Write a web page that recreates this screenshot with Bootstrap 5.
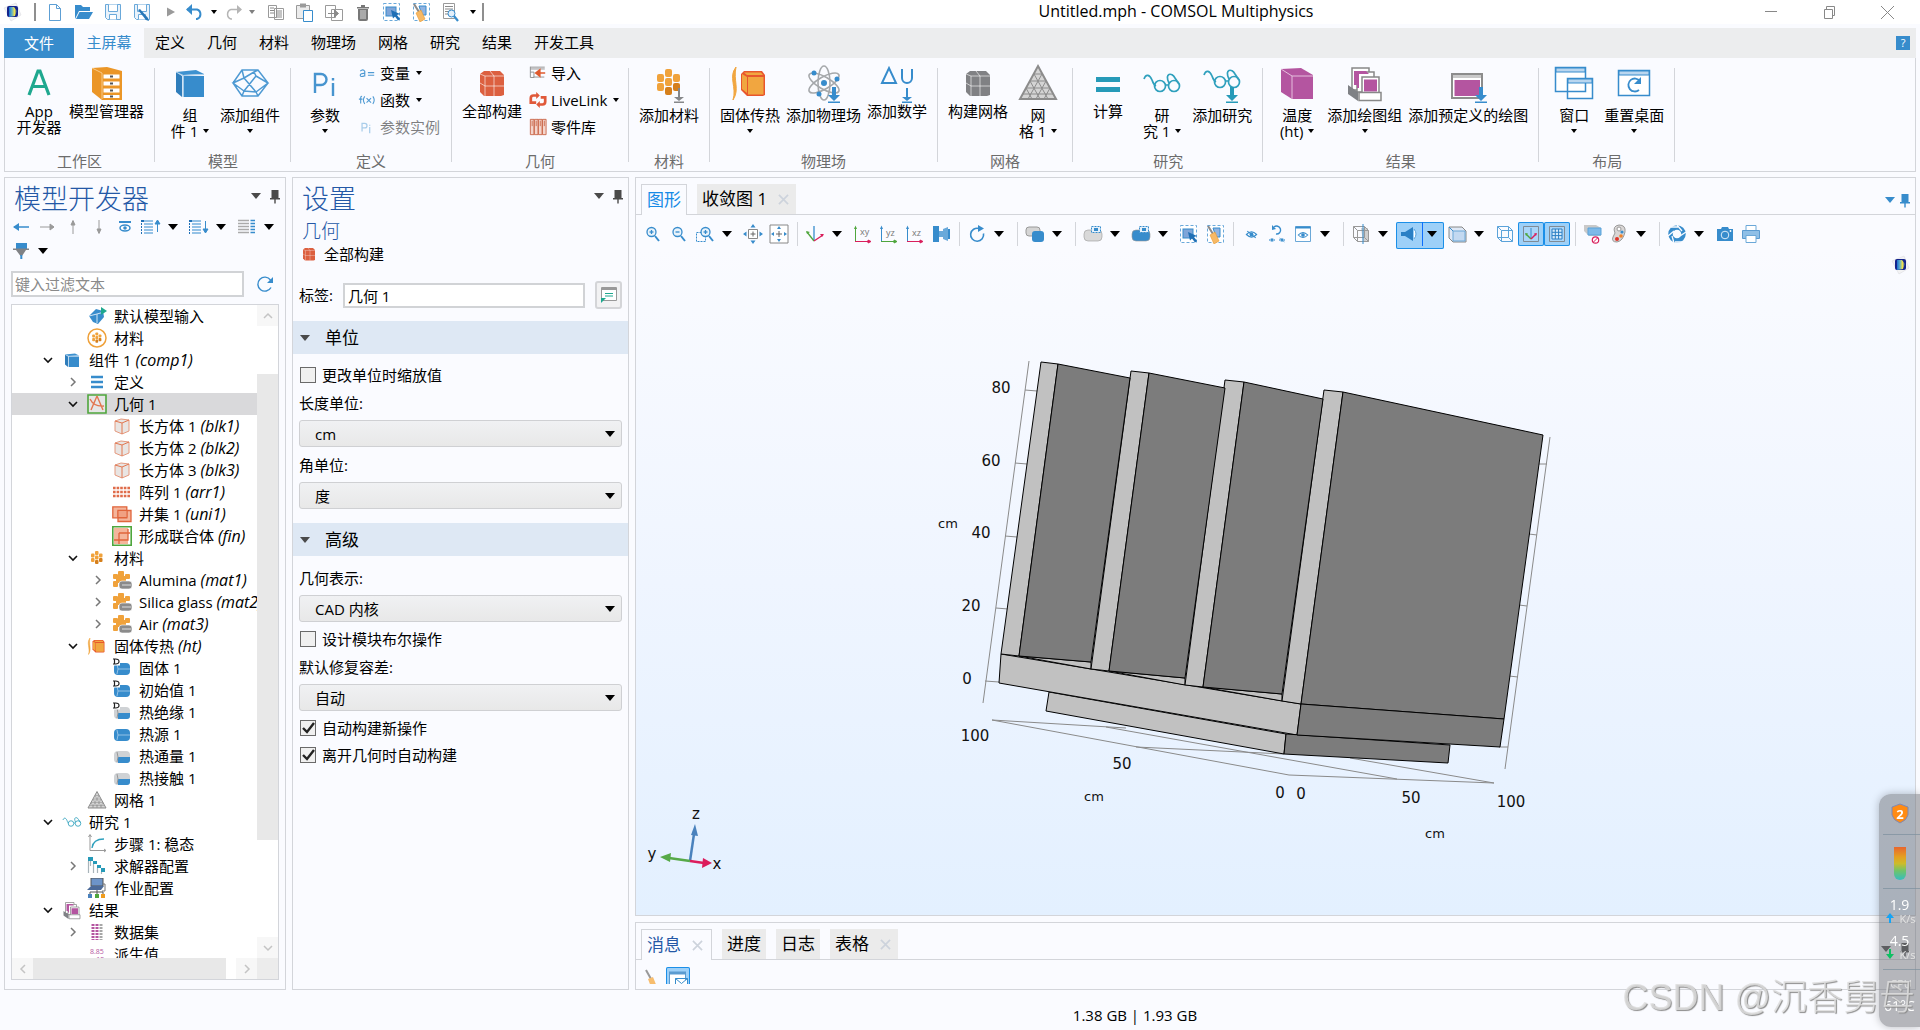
<!DOCTYPE html>
<html lang="zh-CN">
<head>
<meta charset="utf-8">
<meta name="viewport" content="width=device-width, initial-scale=1">
<title>Untitled.mph - COMSOL Multiphysics</title>
<link href="https://cdn.jsdelivr.net/npm/bootstrap@5.3.0/dist/css/bootstrap.min.css" rel="stylesheet">
<style>
:root{--blue:#378ccc;--line:#d3d5da;--bg:#fafbff}
body{font:15px/22px "Open Sans","Noto Sans CJK SC",sans-serif;color:#000;background:var(--bg)}
button{border:0;background:none;padding:0;color:inherit;font:inherit;display:flex;align-items:center;justify-content:center;flex:none}
svg{display:block;flex:none}
.i20{width:20px;height:20px}
.i40{width:40px;height:40px}
.tri{width:0;height:0;flex:none;border:5px solid transparent;border-top:6px solid #000;border-bottom:0}
.tri-s{width:0;height:0;flex:none;border:3px solid transparent;border-top:4px solid #000;border-bottom:0}
.tri-gray{border-top-color:#4a4a4a}
.tri-blue{border-top-color:var(--blue)}
.ink-gray{color:#4a4a4a}
/* title bar */
.titlebar{height:24px;background:#fff;margin-bottom:4px}
.qat button{width:29px;height:24px}
.qat .q-mid{width:20px}
.qat .q-arr{width:18px}
.qbar{width:2px;height:18px;background:#8f8f8f}
.logo{width:34px;padding-left:2px}
.title-text{font-size:16px;padding-left:126px;padding-bottom:3px}
.winctl{padding-right:4px}
.winctl button{width:58px;height:20px}
/* ribbon */
.app-body{padding:0 4px}
.tabs{height:30px;background:#ecedee}
.tabs a{display:flex;align-items:center;padding:0 11px 2px;color:#000;text-decoration:none}
.tabs a.file{background:var(--blue);color:#fff;width:70px;justify-content:center;padding:0}
.tabs a.on{background:var(--bg);color:var(--blue);width:70px;justify-content:center;padding:0 0 2px}
.help{width:14px;height:14px;background:var(--blue);color:#fff;font-size:11px;line-height:14px;margin-right:6px}
.ribbon{height:114px;border:1px solid var(--line);border-top:0;margin-bottom:5px}
.grp{position:relative;padding:0 8px 0 7px;display:flex;flex-direction:column}
.grp.wide{padding:0 8px}
.grp::after{content:"";position:absolute;right:0;top:10px;bottom:9px;width:1px;background:var(--line)}
.grp-items{display:flex;height:93px}
.grp-name{text-align:center;color:#6c6c6c;line-height:20px}
.big{flex-direction:column;justify-content:flex-start;min-width:54px;padding:5px 3px 0;line-height:16px;white-space:nowrap}
.big .i40{margin-bottom:4px}
.big.plain .i40{margin-bottom:0}
.big .drop{display:flex;align-items:center;justify-content:center;height:16px;gap:5px}
.smalls{display:flex;flex-direction:column;padding:4px 5px 0 6px;gap:5px;align-items:flex-start}
.smalls button{gap:4px;height:22px}
.smalls .i20{width:18px}
.smalls .tri-s{margin-left:2px}
.w-def{width:92px}
.w-geo{width:96px;padding-left:4px}
/* panels */
.work{gap:6px;flex:1 1 0;min-height:0}
.pane{border:1px solid var(--line);background:var(--bg);display:flex;flex-direction:column;min-height:0;min-width:0}
.pane-left{width:282px}
.pane-mid{width:337px}
.head{font-size:27px;font-weight:300;color:#2458a6;line-height:37px}
.head-row{height:37px;padding:2px 0 0 9px}
.head-row button{padding-bottom:3px}
.tb button{width:26px;height:24px}
.tb .arr{width:22px;justify-content:flex-start;padding-left:4px}
.tb .bar{width:10px;height:24px;display:flex;justify-content:center;flex:none}
.tb .bar::after{content:"";width:1px;background:var(--line)}
.tb-left{padding-left:3px}
.filter-row{margin:8px 6px 0;gap:7px}
.filter-box{height:26px;border:2px solid #d1d3d6;border-radius:0;padding:0 2px;font-size:15px;color:#000;background:#fff}
.filter-box::placeholder{color:#8a8a8a;opacity:1}
.filter-box:focus{box-shadow:none}
.tree{border:1px solid var(--line);background:#fff;margin:7px 6px 9px;flex:1 1 0;min-height:0;display:grid;grid-template:minmax(0,1fr) 21px/minmax(0,1fr) 21px}
.tree-list{overflow:hidden;margin:0;padding:0;list-style:none}
.tree-list li{height:22px;display:flex;align-items:center;white-space:pre;padding-left:49px}
.tree-list em{font-size:16px}
.tree-list .l0{padding-left:24px}
.tree-list .l2{padding-left:74px}
.tree-list .sel{background:#d9d9db}
.tree-list .tw{width:24px;display:flex;justify-content:center;flex:none}
.tree-list .tw svg{width:12px;height:12px}
.tree-list .ic{width:24px;margin-right:5px;display:flex;justify-content:center;flex:none}
.vbar,.hbar{display:flex;background:#fff;border:0}
.vbar{flex-direction:column}
.vbar span,.hbar span{flex:none;width:21px;height:21px;background:#f7f7f7;display:flex;align-items:center;justify-content:center}
.vbar .thumb{height:71.4%;width:auto;margin-top:48px;background:#e8e8e8}
.hbar .thumb{width:193px;height:auto;background:#e8e8e8;margin-right:auto}
.corner{background:#ececec}
/* settings */
.sub{font-size:19px;font-weight:300;color:#2458a6;line-height:24px;padding-left:9px}
.build{padding-left:6px;gap:5px}
.label-row{padding:0 6px;gap:10px}
.label-box{height:25px;border:2px solid #d1d3d6;border-radius:0;padding:0 3px;font-size:15px;color:#000;background:#fff}
.boxbtn{width:27px;height:28px;border:2px solid #d4d5d8;border-radius:3px;background:#f2f2f3}
.sec{height:33px;background:#dee8f4;font-size:17px;padding-left:7px;gap:15px}
.sec-next{margin-top:11px}
.fields{padding:7px 6px 0}
.fields .lab{display:block;line-height:22px;height:32px;padding-top:4px}
.pick{position:relative;margin-bottom:3px}
.pick::after{content:"";position:absolute;right:7px;top:11px;border:5px solid transparent;border-top:6px solid #000;border-bottom:0;pointer-events:none}
.pick .form-select{height:27px;border:1px solid #cfd0d3;border-radius:3px;padding:0 30px 0 15px;font-size:15px;line-height:24px;color:#000;background:linear-gradient(#f0f1f3,#e8e8e8)}
.tick{display:flex;align-items:center;gap:6px;height:27px;margin:0;padding:0 0 0 1px;min-height:0}
.tick .form-check-input{float:none;margin:0;width:16px;height:16px;border:1px solid #6a6a6a;border-radius:0;background:#f0f0f0}
.tick .form-check-input:checked{background:#f0f0f0}
.tick .bx{position:relative;width:16px;height:16px;flex:none}
.tick .bx svg{position:absolute;inset:1px;width:14px;height:14px;pointer-events:none}
/* graphics */
.gtabs{height:37px;padding-left:5px;border-bottom:1px solid var(--line);align-items:flex-end;gap:10px}
.gtabs .gt{height:30px;padding:0 7px 0 5px;font-size:17px;background:#ebebeb;color:#000;gap:11px;justify-content:flex-start}
.gtabs .gt.short{padding:0 5px}
.gtabs .gt.on{height:31px;background:var(--bg);border:1px solid var(--line);border-bottom:0;margin-bottom:-1px;padding:0 5px;color:#158ae6}
.gtabs .gt.msg{color:#2458a6;padding:0 8px 0 5px}
.gt .x{width:11px;height:11px}
.gtb{padding:7px 0 0 4px;height:34px}
.tgl{background:#9dd0f8;box-shadow:inset 0 0 0 1px #1b8fe8;border-radius:2px}
.canvas-area{flex:1 1 0;min-height:0;background:linear-gradient(#fafbff,#eff5ff 50%,#e3f0ff);position:relative}
.scene{width:100%;height:100%}
.corner-logo{position:absolute;right:5px;top:6px}
.pane-msg{height:68px;flex:none}
.msgbtns{height:24px;overflow:hidden;padding:7px 0 0 8px;gap:6px}
.status{height:40px;padding:14px 0 0 350px;text-align:center}
/* overlays */
.monitor{position:fixed;right:0;bottom:3px;width:41px;height:233px;background:rgba(112,113,120,.5);border-radius:12px 0 0 12px;box-shadow:0 0 8px rgba(0,0,0,.25);color:#fff;z-index:5}
.monitor hr{margin:0 0 0 4px;border-color:#7c8f9c;opacity:.7}
.monitor .num{font-size:14px;line-height:16px;text-align:center}
.monitor .unit{font-size:11px;line-height:12px;color:#e4e4e4;display:flex;justify-content:center;gap:5px;padding-left:3px}
.heat{width:12px;height:33px;border-radius:0 0 6px 6px;background:linear-gradient(#e8662e,#e5a021 30%,#cdbb2a 50%,#6fc46a 72%,#35bdc0)}
.mark-text{position:fixed;right:5px;bottom:8px;font:300 36px/48px "Liberation Sans","Noto Sans CJK SC",sans-serif;color:rgba(222,222,222,.85);text-shadow:1px 1px 1px #8b8b8b;white-space:nowrap;z-index:6;pointer-events:none}
</style>
<script src="https://cdn.jsdelivr.net/npm/bootstrap@5.3.0/dist/js/bootstrap.bundle.min.js"></script>
</head>
<body>
<svg width="0" height="0" class="position-absolute" aria-hidden="true">
<defs>
<linearGradient id="lg" x1="0" x2="1"><stop offset="0" stop-color="#1a6fd0"/><stop offset=".35" stop-color="#5fb0c8"/><stop offset=".7" stop-color="#f2e14a"/><stop offset="1" stop-color="#1540a8"/></linearGradient>
<symbol id="logo" viewBox="0 0 20 20"><path d="M2 6 14 1l5 12-10 6z" fill="#f3f3f4" stroke="#dcdce0" stroke-width=".6"/><rect x="5" y="4" width="11" height="11" rx="2" fill="#14248c"/><path d="M7 5h5l3 4-2 5-6 1z" fill="url(#lg)"/></symbol>
<symbol id="doc" viewBox="0 0 20 20"><path d="M4.500 2.500h7l4 4v12h-11zM11.500 2.500v4h4" fill="#fff" stroke="#5d9fd4"/></symbol>
<symbol id="folder" viewBox="0 0 20 20"><path d="M1 17V3h6l2 2h7v4H5z" fill="#378ccc"/><path d="M5.500 10H19l-4 7H2z" fill="#378ccc"/></symbol>
<symbol id="save" viewBox="0 0 20 20"><path d="M2.500 2.500h15v15h-13l-2-2z" fill="#eaf3fb" stroke="#6aa9da"/><path d="M5.500 2.500v7h9v-7M6.500 17.500v-5h7v5" fill="#fff" stroke="#6aa9da"/></symbol>
<symbol id="saveas" viewBox="0 0 20 20"><use href="#save"/><path d="m6 8 2-1 8 9 1 3-3-1z" fill="#2777b8"/></symbol>
<symbol id="play" viewBox="0 0 20 20"><path d="M6 5.500v9l8-4.500z" fill="#9a9a9a"/></symbol>
<symbol id="undo" viewBox="0 0 20 20"><path d="M2 7.500h10a5 5 0 0 1 0 9.500h-1" fill="none" stroke="#378ccc" stroke-width="2"/><path d="M7 2v11L1 7.500z" fill="#378ccc"/></symbol>
<symbol id="redo" viewBox="0 0 20 20"><path d="M18 7.500H8a5 5 0 0 0 0 9.500h1" fill="none" stroke="#b5b5b5" stroke-width="1.500"/><path d="M14 3v9l5-4.500z" fill="#b5b5b5"/></symbol>
<symbol id="copy" viewBox="0 0 20 20"><path d="M2.500 3.500h8v12h-8zM8.500 6.500h9v11h-9z" fill="#fff" stroke="#9a9a9a"/><path d="M4 6h4M4 8.500h4M4 11h4M10 9h6M10 11h6M10 13h6M10 15h6" stroke="#8a8a8a"/></symbol>
<symbol id="paste" viewBox="0 0 20 20"><path d="M1.500 3.500h13v13h-13z" fill="#ececec" stroke="#9a9a9a"/><path d="M5 1.500h6v4H5z" fill="#9a9a9a"/><path d="M8.500 8.500h9v11h-9z" fill="#fff" stroke="#378ccc"/></symbol>
<symbol id="dup" viewBox="0 0 20 20"><path d="M1.500 3.500h10v12h-10zM7.500 7.500h11v11h-11z" fill="#fff" stroke="#9a9a9a"/><path d="M4 11.500h9M10.500 8l4 3.500-4 3.500z" stroke="#8a8a8a" fill="#8a8a8a"/></symbol>
<symbol id="trash" viewBox="0 0 20 20"><path d="M4 5h12v1.500H4zM8 3h4v2H8zM5 7h10v10q0 2-2 2H7q-2 0-2-2z" fill="#777"/><path d="M8 8v9M10 8v9M12 8v9" stroke="#ddd"/></symbol>
<symbol id="selbox" viewBox="0 0 20 20"><rect x="1.500" y="1.500" width="16" height="17" fill="#fff" stroke="#6aa9da" stroke-dasharray="3 2"/><rect x="4" y="5" width="10" height="9" fill="#7fa5d8" stroke="#378ccc"/><path d="m9 8 9 4-3 1 3 4-2 1.500-3-4-2 2z" fill="#1f6fb5"/></symbol>
<symbol id="clearbox" viewBox="0 0 20 20"><rect x="2.500" y="1.500" width="16" height="17" fill="#fff" stroke="#6aa9da" stroke-dasharray="3 2"/><path d="M8 4h7v9h-4z" fill="#8fb3e2" stroke="#378ccc"/><path d="m3 2 5 8" stroke="#8a8a8a" stroke-width="2"/><path d="m5 11 5-3 4 9-5 3z" fill="#f7b965" stroke="#eb9a2f" stroke-width=".6"/></symbol>
<symbol id="finddoc" viewBox="0 0 20 20"><path d="M3.500 1.500h11v15h-11z" fill="#fff" stroke="#9a9a9a"/><path d="M5 4.500h8M5 7h8M5 9.500h5M5 12h4" stroke="#8a8a8a"/><circle cx="11.500" cy="11.500" r="3.500" fill="#e3effa" stroke="#378ccc"/><path d="m14 14 4 5" stroke="#378ccc" stroke-width="2.200"/></symbol>
<symbol id="pin" viewBox="0 0 20 20"><path d="M6.500 4h7v8h1.500v1.500H5V12h1.500zM9.300 13h1.400v4.500H9.300z" fill="currentColor"/></symbol>
<!-- ribbon -->
<symbol id="A" viewBox="0 0 40 40"><path d="M10 32 19 8h2l9 24M13 23.500h14" fill="none" stroke="#1fa88f" stroke-width="3.200"/></symbol>
<symbol id="cab" viewBox="0 0 40 40"><path d="M5 5 20 4l15 4v29H15L5 29z" fill="#eb9627"/><path d="M15 10 34 9v27H15z" fill="#eb9627"/><path d="M16.500 11.500h16v4h-16zM16.500 18.500h16v4h-16zM16.500 25.500h16v4h-16zM16.500 32h16v3h-16z" fill="#fff"/><path d="M23 13.500h3M23 20.500h3M23 27.500h3M23 33.500h3" stroke="#555" stroke-width="2"/><path d="m5 5 10 5v26" fill="none" stroke="#fbd7a0" stroke-width=".8"/></symbol>
<symbol id="cube" viewBox="0 0 40 40"><path d="M6 9 26 7l8 4-21 1z" fill="#3e92d0"/><path d="m6 9 6 4v21l-6-5z" fill="#2f7dbb"/><path d="M13.500 13H34v21H13.500z" fill="#378ccc"/><path d="m6 9 7 3.500V34M13 12.500 34 11.500" fill="none" stroke="#a8cdea"/></symbol>
<symbol id="poly" viewBox="0 0 40 40"><path d="m3 20 9-13h16l10 13-10 13H12zM12 7l2 8 10-6 4-2M14 15 3 20l11 8M26 13l12 7-12 9M14 28l12 1M12 33l2-5M28 33l-2-4M14 15l12 14M14 28l12-15M24 9l2 4" fill="none" stroke="#4f9ad3" stroke-width="1.500"/></symbol>
<symbol id="pi" viewBox="0 0 40 40"><path d="M10 30V11h6a5.500 5.500 0 0 1 0 11h-6M28 20v13M28 15v2.500" fill="none" stroke="#4794cf" stroke-width="2.400"/></symbol>
<symbol id="grid3" viewBox="0 0 40 40"><path d="M8 11 12 8h16l4 4v20l-3 1H12l-4-4z" fill="currentColor"/><path d="M13 13h19M13 13v20M22 13v20M13 23h19M8 20l5 3M8 11l5 2M22 13l-4-5" stroke="#fff" stroke-opacity=".6" fill="none"/></symbol>
<symbol id="down" viewBox="0 0 40 40"><path d="M28 24h4v8h4l-6 6-6-6h4zM24 38.500h12V41H24z" fill="currentColor"/></symbol>
<symbol id="downthin" viewBox="0 0 40 40"><path d="M29 25h2v9h4l-5 4-5-4h4zM25 38.500h10V40H25z" fill="currentColor"/></symbol>
<symbol id="mats" viewBox="0 0 40 40"><g fill="#f0a23b"><rect x="16" y="6" width="7" height="8" rx="2"/><rect x="16" y="15" width="7" height="8" rx="2"/><rect x="8" y="11" width="7" height="8" rx="2"/><rect x="8" y="20" width="7" height="8" rx="2"/><rect x="24" y="11" width="7" height="8" rx="2"/></g><g fill="#d57f1b"><rect x="16" y="24" width="7" height="8" rx="2"/><rect x="24" y="20" width="7" height="8" rx="2"/></g></symbol>
<symbol id="heat" viewBox="0 0 40 40"><path d="M6 4c-8 10 1 20-3 33C10 26 3 18 6 4z" fill="#f1a640" stroke="#f1a640"/><path d="m11 11 3-3h18l3 4v20l-2 1H17l-6-6z" fill="#e8562d"/><path d="M18 14h15.500v17.500H18z" fill="#f1a640"/><path d="m12 11 5 3v16l-5-4zM14 9.500h17l2 2.500H17z" fill="#f1a640"/></symbol>
<symbol id="atom" viewBox="0 0 40 40"><g fill="none" stroke="#a5a8ab" stroke-width="1.600"><ellipse cx="20" cy="20" rx="6" ry="17"/><ellipse cx="20" cy="20" rx="6" ry="17" transform="rotate(60 20 20)"/><ellipse cx="20" cy="20" rx="6" ry="17" transform="rotate(-60 20 20)"/></g><g fill="#378ccc"><circle cx="20" cy="20" r="3"/><circle cx="10" cy="10" r="2.500"/><circle cx="33" cy="16" r="2.500"/><circle cx="15" cy="31" r="2.500"/></g></symbol>
<symbol id="du" viewBox="0 0 40 40"><path d="m5 20 7-15 7 15zM25 6v9a5 5 0 0 0 10 0V6" fill="none" stroke="#378ccc" stroke-width="2"/></symbol>
<symbol id="mesh" viewBox="0 0 40 40"><path d="M20 3 38 36H2z" fill="#d4d4d4" stroke="#8c8c8c" stroke-width="2"/><path d="M16 11h8M12 18h16M8 25h24M5 31h30M12 18l10 18M8 25l6 11M16 11l14 25M28 18 18 36M32 25l-6 11M24 11 10 36" stroke="#8c8c8c" fill="none"/></symbol>
<symbol id="eq" viewBox="0 0 40 40"><path d="M8 14h24v5H8zM8 24h24v5H8z" fill="#269ab8"/></symbol>
<symbol id="glasses" viewBox="0 0 40 40"><g fill="none" stroke="#2fa0bd" stroke-width="1.700"><circle cx="18" cy="23" r="5.500"/><circle cx="32" cy="23" r="5.500"/><path d="M2 16c2-6 6-4 8 1 1 3 2 5 4 6M24 22h2M27 20c-5-10 3-11 6-5l4 6"/></g></symbol>
<symbol id="pcube" viewBox="0 0 40 40"><path d="M4 6 24 5l12 7v24H15L4 29z" fill="#b455a0"/><path d="m4 6 11 7v23M15 13h21" stroke="#e5bfdd" fill="none"/></symbol>
<symbol id="pgroup" viewBox="0 0 40 40"><g fill="#fff" stroke="#888" stroke-width="1.500"><path d="M7 5h17v22H7z"/><path d="M12 9h17v20H12z"/><path d="M17 14h17v18H17z"/></g><path d="M9 8h3v14H9zM12 8h9l3 3H14v14h-2zM19 16.500h13v12H19z" fill="#b455a0"/><path d="m3 22 10 7v9L3 31z" fill="#7f8185"/><path d="M14 29.500h22v8H14z" fill="#fff" stroke="#888" stroke-width="1.500"/></symbol>
<symbol id="pwin" viewBox="0 0 40 40"><path d="M4 11h30v24H4z" fill="#fff" stroke="#8c8c8c" stroke-width="2"/><path d="M5 12h28v3H5z" fill="#c9c9c9"/><path d="M6.500 17H32v16H6.500z" fill="#b455a0"/></symbol>
<symbol id="wins" viewBox="0 0 40 40"><path d="M1.500 4.500h30v24h-30zM13.500 15.500h25v20h-25z" fill="#fff" stroke="#378ccc" stroke-width="1.500"/><path d="M2 5h29v4H2zM14 16h24v4H14z" fill="#b9d6ef" stroke="#378ccc"/></symbol>
<symbol id="reset" viewBox="0 0 40 40"><path d="M4.500 7.500h31v25h-31z" fill="#fff" stroke="#378ccc" stroke-width="1.500"/><path d="M5 8h30v4H5z" fill="#b9d6ef" stroke="#378ccc"/><path d="M25 27a6.500 6.500 0 1 1 1-9" fill="none" stroke="#378ccc" stroke-width="1.800"/><path d="M27 14v7h-7z" fill="#378ccc"/></symbol>
<!-- small ribbon -->
<symbol id="aeq" viewBox="0 0 20 20"><path d="M2.500 8q3-3 5 0v6M7.500 10.500q-5-.5-5 2t5 .5M11 9.500h7M11 12.500h7" fill="none" stroke="#4f9ad3" stroke-width="1.300"/></symbol>
<symbol id="fx" viewBox="0 0 20 20"><path d="M4.500 6Q3 5.500 3 8v6M1 9h4M7.500 6q-3 4 0 8.500M16.500 6q3 4 0 8.500M9.500 8l5 5M14.500 8l-5 5" fill="none" stroke="#4f9ad3" stroke-width="1.200"/></symbol>
<symbol id="pis" viewBox="0 0 20 20"><path d="M4.500 15V6h3a2.500 2.500 0 0 1 0 5h-3M13 10v7M13 7.500v1" fill="none" stroke="#a9cdea" stroke-width="1.400"/></symbol>
<symbol id="imp" viewBox="0 0 20 20"><path d="M1.500 5.500h16M1.500 3.500h16M1.500 3v12M1.500 9h4v6h-4M5 14.500h12" fill="none" stroke="#8b8b8b"/><path d="M18 10h-8M12 6.500 7.500 10l4.500 3.500z" stroke="#df5a2e" fill="#df5a2e" stroke-width="1.800"/></symbol>
<symbol id="llink" viewBox="0 0 20 20"><path d="M9 5H5Q2 5 2 8v5h6M11 15h4q3 0 3-3V7h-5" fill="none" stroke="#e0593a" stroke-width="3"/><path d="m8 1 4 4-4 4zM12 11v8l-4-4z" fill="#e0593a"/></symbol>
<symbol id="parts" viewBox="0 0 20 20"><path d="M1.500 1.500h4v17h-4zM6 1.500h4v17H6zM10.500 1.500h4v17h-4zM15 1.500h4v17h-4z" fill="#f4d5cc" stroke="#c9674a"/><path d="M3.500 3v6M8 3v6M12.500 3v6M17 3v6" stroke="#c9674a"/></symbol>
<!-- tree toolbar -->
<symbol id="aL" viewBox="0 0 20 20"><path d="M3 10h15" stroke="#378ccc" stroke-width="1.500"/><path d="M8 6 2 10l6 4z" fill="#378ccc"/></symbol>
<symbol id="aR" viewBox="0 0 20 20"><path d="M3 10h14M13 7l4 3-4 3z" stroke="#9a9a9a" fill="#9a9a9a"/></symbol>
<symbol id="aU" viewBox="0 0 20 20"><path d="M10 17V4M8 8l2-4.500L12 8z" stroke="#9a9a9a" fill="#9a9a9a"/></symbol>
<symbol id="aD" viewBox="0 0 20 20"><path d="M10 3v13M8 12l2 4.500 2-4.500z" stroke="#9a9a9a" fill="#9a9a9a"/></symbol>
<symbol id="eyebar" viewBox="0 0 20 20"><path d="M4 5h12" stroke="#378ccc" stroke-width="2"/><ellipse cx="10" cy="11" rx="5" ry="3" fill="#fff" stroke="#378ccc" stroke-width="1.500"/><circle cx="10" cy="11" r="1.800" fill="#378ccc"/></symbol>
<symbol id="lines" viewBox="0 0 20 20"><path d="M0 4h12M3 7h9M3 10h9M3 13h9M3 16h9" stroke="#74b0de" stroke-width="1.400"/><path d="M0 4h3M0 7h1M0 10h1M0 13h1M0 16h1" stroke="#1f6fb5" stroke-width="2"/></symbol>
<symbol id="lup" viewBox="0 0 20 20"><use href="#lines"/><path d="M16.500 15V4M14 7l2.500-4L19 7z" stroke="#378ccc" fill="#378ccc"/></symbol>
<symbol id="ldn" viewBox="0 0 20 20"><use href="#lines"/><path d="M16.500 4v11M14 12l2.500 4 2.500-4z" stroke="#378ccc" fill="#378ccc"/></symbol>
<symbol id="lcol" viewBox="0 0 20 20"><path d="M1 3.500h11M1 6.500h11M1 9.500h11M1 12.500h11M1 15.500h11" stroke="#aaa" stroke-width="1.500"/><path d="M13.500 3.500H18M13.500 6.500H18M13.500 9.500H18M13.500 12.500H18M13.500 15.500H18" stroke="#378ccc" stroke-width="1.500"/></symbol>
<symbol id="filt" viewBox="0 0 20 20"><path d="M5 2h11v6H5z" fill="#378ccc"/><path d="M2 7.500h16v1.500h-3l-4 6H9.500L5 9H2z" fill="#808285"/><path d="M10.300 14v4" stroke="#378ccc" stroke-width="2"/></symbol>
<symbol id="refresh" viewBox="0 0 20 20"><path d="M16 13.500A7 7 0 1 1 15.500 6" fill="none" stroke="#378ccc" stroke-width="1.400"/><path d="M18 3v6h-6z" fill="#378ccc"/></symbol>
<!-- tree icons -->
<symbol id="dn" viewBox="0 0 12 12"><path d="m2 4 4 4 4-4" fill="none" stroke="#111" stroke-width="1.600"/></symbol>
<symbol id="rt" viewBox="0 0 12 12"><path d="m4 2 4 4-4 4" fill="none" stroke="#777" stroke-width="1.500"/></symbol>
<symbol id="cs" viewBox="0 0 14 14"><path d="m3 9 4-4 4 4" fill="none" stroke="#c4c4c4" stroke-width="1.500"/></symbol>
<symbol id="tinp" viewBox="0 0 20 20"><path d="m2 10 7-7 7 2 1 6-6 7-5-2z" fill="#378ccc"/><path d="m2 10 8-2 7-2M10 8v9" stroke="#cfe4f5" fill="none"/><path d="m14 1 6 4-6 4z" fill="#1fa88f"/></symbol>
<symbol id="tmat" viewBox="0 0 20 20"><circle cx="10" cy="10" r="9" fill="#fff" stroke="#efa13a" stroke-width="1.500"/><svg x="2" y="2" width="16" height="16"><use href="#mats"/></svg></symbol>
<symbol id="tlist" viewBox="0 0 20 20"><path d="M4 5h12M4 10h12M4 15h12" stroke="#378ccc" stroke-width="2.400"/></symbol>
<symbol id="tgeo" viewBox="0 0 20 20"><path d="M1 1h18v18H1z" fill="#e6e6e6" stroke="#4fa63d" stroke-width="1.600"/><path d="M10 2 4 16M10 2l6 14M3 5q4 8 14 7" fill="none" stroke="#e2764f" stroke-width="1.400"/></symbol>
<symbol id="tblk" viewBox="0 0 20 20"><path d="m3 5 6-2 8 1v11l-7 3-7-3z" fill="#e9e5e3" stroke="#e59a7f"/><path d="m3 5 7 2 7-3M10 7v11" fill="none" stroke="#e2764f"/></symbol>
<symbol id="tarr" viewBox="0 0 20 20"><path d="M1 6h18M1 10h18M1 14h18" stroke="#df6c4a" stroke-width="2.600" stroke-dasharray="2.600 1"/></symbol>
<symbol id="tuni" viewBox="0 0 20 20"><path d="M.800 2.800h14v11h-14zM6 6.500h13v11H6z" fill="#f4b59b" stroke="#e0653c" stroke-width="1.300"/><path d="M6 6.500h9v7H6z" fill="#f0a183" stroke="#e0653c"/></symbol>
<symbol id="tfin" viewBox="0 0 20 20"><path d="M.800.800h18.400v18.400H.800z" fill="#fff" stroke="#4fa63d" stroke-width="1.600"/><path d="M2 2h14v16H2z" fill="#f4b59b"/><path d="M2 14h14V3M7 7h11M7 7v11" fill="none" stroke="#e0653c" stroke-width="1.300"/></symbol>
<symbol id="tm" viewBox="0 0 20 20"><g fill="#f0a23b"><rect x="6" y="1" width="6" height="6" rx="1"/><rect x="1" y="4" width="5" height="5" rx="1"/><rect x="13" y="4" width="5" height="5" rx="1"/><rect x="7" y="8" width="5" height="5"/><rect x="1" y="11" width="5" height="6" rx="1"/><rect x="4" y="6" width="10" height="7"/></g><rect x="7" y="11" width="13" height="8" rx="3" fill="#8b8b8b" stroke="#fff" stroke-width=".6"/><path d="M10 15h9" stroke="#ddd"/></symbol>
<symbol id="cylb" viewBox="0 0 20 20"><rect x="2" y="5" width="16" height="12" rx="4" fill="#378ccc"/><path d="M6 11h12M5 6q2 5 0 10" stroke="#a9cfec" fill="none" stroke-width=".8"/></symbol>
<symbol id="cylg" viewBox="0 0 20 20"><rect x="2" y="5" width="16" height="12" rx="4" fill="#cfd2d5"/><path d="M6 11h12v3q0 3-3 3H6z" fill="#378ccc"/><path d="M5 6q2 5 0 10" stroke="#999" fill="none"/></symbol>
<symbol id="dbadge" viewBox="0 0 20 20"><path d="M0 0h8v7.500H0z" fill="#fff"/><path d="M1 1h2.500q3.500 0 3.500 2.500T3.500 6H1M2.500 1v5" fill="none" stroke="#222" stroke-width="1.200"/></symbol>
<symbol id="tstep" viewBox="0 0 20 20"><path d="M3 1v15.500h16M1.500 3 3 .500 4.500 3M17 15l2 1.500-2 1.500" fill="none" stroke="#999"/><path d="M5 14Q6 5 17 5" fill="none" stroke="#2fa0bd" stroke-width="1.300"/></symbol>
<symbol id="tsol" viewBox="0 0 20 20"><path d="M1 1h5v4H1zM6 5h4v3H6zM10 9h4v3h-4zM14 12h4v4h-4z" fill="#269ab8"/><path d="M1.500 5v12M6.500 8v9M10.500 12v5M3.500 5v5M14.500 16v2" stroke="#a8b4ba" stroke-width="1.200"/></symbol>
<symbol id="tjob" viewBox="0 0 20 20"><path d="M4 0h12v8H4z" fill="#6d94c8" stroke="#555"/><path d="M0 12 4 8h13l-3 4z" fill="#4c6a98"/><path d="M16 6h2v7h-3" fill="none" stroke="#777"/><path d="M10 12v4M3 16v-2h13v2" stroke="#555" fill="none"/><path d="M1 16h4v4H1z" fill="#4a82bd"/><path d="M8 16h4v4H8z" fill="#4fa63d"/><path d="M14 16h4v4h-4z" fill="#f09c1d"/></symbol>
<symbol id="tdata" viewBox="0 0 20 20"><path d="M6 2v16M10 2v16" stroke="#b455a0" stroke-width="3" stroke-dasharray="2 1"/><path d="M14 2v16" stroke="#a7a7a7" stroke-width="3" stroke-dasharray="2 1"/></symbol>
<!-- graphics toolbar -->
<symbol id="mag" viewBox="0 0 20 20"><circle cx="8.500" cy="8" r="4.500" fill="#e9f3fb" stroke="#378ccc" stroke-width="1.300"/><path d="m12 12 4 5" stroke="#378ccc" stroke-width="2"/><path d="M6.500 8h4" stroke="#378ccc" stroke-width="1.300"/></symbol>
<symbol id="plus" viewBox="0 0 20 20"><path d="M8.500 6v4" stroke="#378ccc" stroke-width="1.300"/></symbol>
<symbol id="zext" viewBox="0 0 20 20"><path d="M5.500 5.500h9v9h-9z" fill="#fff" stroke="#888"/><path d="M10 7.500v5M7.500 10h5" stroke="#666"/><path d="M10 0 7.500 3.500h5zM10 20l-2.500-3.500h5zM0 10l3.500-2.500v5zM20 10l-3.500-2.500v5z" fill="#378ccc"/></symbol>
<symbol id="zfit" viewBox="0 0 20 20"><path d="M1 1h18v18H1z" fill="#fff" stroke="#888"/><path d="M10 7v6M7 10h6" stroke="#666"/><path d="M10 2 8 5h4zM10 18l-2-3h4zM2 10l3-2v4zM18 10l-3-2v4z" fill="#378ccc"/></symbol>
<symbol id="ax3" viewBox="0 0 20 20"><path d="M9 2v15" stroke="#378ccc" stroke-width="1.300"/><path d="M9 17 2 8" stroke="#4fa63d" stroke-width="1.300"/><path d="m9 17 9-6" stroke="#d91f5c" stroke-width="1.300"/><path d="m1 7 4 1-3 2z" fill="#4fa63d"/><path d="M19 10h-4l2 3z" fill="#d91f5c"/></symbol>
<symbol id="axxy" viewBox="0 0 20 20"><path d="M2.500 18V3" stroke="currentColor"/><path d="M1 5 2.500 1.500 4 5z" fill="currentColor"/></symbol>
<symbol id="lens" viewBox="0 0 20 20"><path d="M2 2h6v16H2z" fill="#378ccc"/><path d="M8 7h4v6H8zM12 5l5-2v14l-5-2z" fill="#69a9da"/><path d="M18 5v10" stroke="#378ccc" stroke-width="2"/></symbol>
<symbol id="rot" viewBox="0 0 20 20"><path d="M12 4.500a6.500 6.500 0 1 0 4.500 5" fill="none" stroke="#378ccc" stroke-width="1.600"/><path d="m11 1 6 3.500L11 8z" fill="#378ccc"/></symbol>
<symbol id="cyl2" viewBox="0 0 20 20"><rect x="1" y="3" width="14" height="9" rx="3" fill="#d5d5d5" stroke="#999"/><rect x="7" y="7" width="12" height="11" rx="3" fill="#378ccc"/></symbol>
<symbol id="scyl" viewBox="0 0 20 20"><rect x="1" y="6" width="18" height="11" rx="4" fill="currentColor" stroke="#999" stroke-width=".6"/><path d="M8.500 2.500h9v6h-9z" fill="#e6f1fa" stroke="#378ccc" stroke-dasharray="2 1"/><path d="M11 4h4v3h-4z" fill="#378ccc"/></symbol>
<symbol id="eye" viewBox="0 0 20 20"><path d="M4 10q6-6 12 0-6 6-12 0z" fill="#fff" stroke="#378ccc" stroke-width="1.300"/><circle cx="10" cy="10" r="2.300" fill="#378ccc"/></symbol>
<symbol id="eyeoff" viewBox="0 0 20 20"><use href="#eye"/><path d="m5 6 10 8" stroke="#378ccc" stroke-width="1.300"/></symbol>
<symbol id="eyerot" viewBox="0 0 20 20"><path d="M7 3a4 4 0 1 1 2 7" fill="none" stroke="#378ccc" stroke-width="1.400"/><path d="M5 1v5l4-1z" fill="#378ccc"/><svg x="0" y="11" width="10" height="10"><use href="#eye"/></svg><svg x="10" y="11" width="10" height="10"><use href="#eyeoff"/></svg></symbol>
<symbol id="eyewin" viewBox="0 0 20 20"><path d="M2.500 2.500h15v15h-15z" fill="#fff" stroke="#6ba8d8"/><path d="M2.500 3.500h15" stroke="#378ccc" stroke-width="2"/><svg x="2" y="3" width="16" height="16"><use href="#eye"/></svg></symbol>
<symbol id="box" viewBox="0 0 20 20"><path d="M2.500 2.500h11l4 4v11h-11l-4-4zM2.500 2.500l4 4h11M6.500 6.500v11M2.500 13.500h11l4 4M13.500 2.500v11" fill="none" stroke="currentColor"/></symbol>
<symbol id="clip" viewBox="0 0 20 20"><path d="M10 4h7v12l-5 2z" fill="#cfcfcf"/><use href="#box"/><path d="M12 0v20" stroke="#378ccc"/></symbol>
<symbol id="horn" viewBox="0 0 20 20"><path d="M2 8h4l8-5v14l-8-5H2z" fill="#2a7fc4"/><path d="M15 5q4 5 0 10" fill="#fff" stroke="#5ba3da"/></symbol>
<symbol id="trbox" viewBox="0 0 20 20"><path d="M2 3h13l4 4v11H6l-4-4z" fill="#dfe8f5" stroke="#888"/><path d="M6 7h12v10H6z" fill="#c3d9f1" stroke="#6ba8d8"/><path d="m2 3 4 4" stroke="#378ccc"/></symbol>
<symbol id="axbox" viewBox="0 0 20 20"><path d="M2.500 2.500h15v15h-15z" fill="#a9d5f8" stroke="#7f8b96"/><path d="M10 4v11" stroke="#378ccc"/><path d="m10 15-5-5" stroke="#4fa63d" stroke-width="1.400"/><path d="m10 15 5-5" stroke="#d91f5c" stroke-width="1.400"/><path d="m4 9 3 .5L5 12z" fill="#4fa63d"/><path d="m16 9-3 .5 2 2.500z" fill="#d91f5c"/></symbol>
<symbol id="grbox" viewBox="0 0 20 20"><path d="M2.500 2.500h15v15h-15z" fill="#a9d5f8" stroke="#7f8b96"/><path d="M5 5h10v10H5zM8.300 5v10M11.600 5v10M5 8.300h10M5 11.600h10" fill="#d6ebfb" stroke="#2a7fc4"/></symbol>
<symbol id="nobox" viewBox="0 0 20 20"><path d="M1 1h12l5 3v8H6L1 7z" fill="#c9c9c9"/><path d="M5 4h13v7H5z" fill="#7db9e8" stroke="#5ba3da"/><circle cx="12.500" cy="16" r="3.200" fill="#fff" stroke="#d91f5c" stroke-width="1.200"/><path d="m10.500 18 4-4" stroke="#d91f5c"/></symbol>
<symbol id="pal" viewBox="0 0 20 20"><path d="M10 1q7 0 6 7-2 9-8 10-6 0-4-5l2-4Q3 2 10 1z" fill="#d9d6d6" stroke="#999"/><circle cx="10" cy="5" r="2" fill="#fff" stroke="#999"/><circle cx="13" cy="8" r="1.600" fill="#378ccc"/><circle cx="12" cy="12" r="1.800" fill="#f0822b"/><circle cx="8" cy="15" r="2" fill="#e0352b"/></symbol>
<symbol id="shut" viewBox="0 0 20 20"><circle cx="10" cy="10" r="6.500" fill="none" stroke="#378ccc" stroke-width="4.500"/><path d="m10 1 5 6M19 8l-6 4M15 18H8M7 19l-2-7M1 12l6-5M4 3h7" stroke="#fafbff" stroke-width="1.300"/></symbol>
<symbol id="cam" viewBox="0 0 20 20"><path d="M2 5h4l1-2h6l1 2h4v12H2z" fill="#378ccc"/><circle cx="10" cy="11" r="3.800" fill="#378ccc" stroke="#dcecf9"/><circle cx="15.500" cy="7" r=".9" fill="#fff"/></symbol>
<symbol id="prn" viewBox="0 0 20 20"><path d="M5 1.500h10v5H5z" fill="#fff" stroke="#6ba8d8"/><path d="M1.500 6.500h17v8h-17z" fill="#8fbfe6" stroke="#5b9bd0"/><path d="M5 11.500h10v7H5z" fill="#fff" stroke="#6ba8d8"/></symbol>
<symbol id="cross" viewBox="0 0 12 12"><path d="m1 1 10 10M11 1 1 11" stroke="#cdd3dc" stroke-width="1.800"/></symbol>
</defs></svg>

<div class="d-flex flex-column vh-100 overflow-hidden">
<header class="titlebar d-flex align-items-center">
  <div class="qat d-flex align-items-center">
    <div class="logo"><svg class="i20"><use href="#logo"/></svg></div><span class="qbar me-1"></span>
    <button aria-label="新建"><svg class="i20"><use href="#doc"/></svg></button><button aria-label="打开"><svg class="i20"><use href="#folder"/></svg></button><button aria-label="保存"><svg class="i20"><use href="#save"/></svg></button><button aria-label="另存为"><svg class="i20"><use href="#saveas"/></svg></button><button aria-label="运行"><svg class="i20"><use href="#play"/></svg></button>
    <button class="q-mid" aria-label="撤消"><svg class="i20"><use href="#undo"/></svg></button><button class="q-arr" aria-label="撤消列表"><i class="tri-s"></i></button>
    <button class="q-mid" aria-label="重做"><svg class="i20"><use href="#redo"/></svg></button><button class="q-arr" aria-label="重做列表"><i class="tri-s opacity-50"></i></button>
    <button aria-label="复制"><svg class="i20"><use href="#copy"/></svg></button><button aria-label="粘贴"><svg class="i20"><use href="#paste"/></svg></button><button aria-label="生成副本"><svg class="i20"><use href="#dup"/></svg></button><button aria-label="删除"><svg class="i20"><use href="#trash"/></svg></button><button aria-label="选择"><svg class="i20"><use href="#selbox"/></svg></button><button aria-label="清除选择"><svg class="i20"><use href="#clearbox"/></svg></button><button aria-label="查找"><svg class="i20"><use href="#finddoc"/></svg></button><button class="q-arr" aria-label="更多"><i class="tri-s"></i></button><span class="qbar"></span>
  </div>
  <div class="title-text flex-grow-1 text-center">Untitled.mph - COMSOL Multiphysics</div>
  <div class="winctl d-flex">
    <button aria-label="最小化"><svg width="12" height="12"><path d="M0 5.500h12" stroke="#888"/></svg></button>
    <button aria-label="还原"><svg width="13" height="13"><path d="M1.500 3.500h8v9h-8zM3.500 3V.500h8v9H10" fill="none" stroke="#888"/></svg></button>
    <button aria-label="关闭"><svg width="13" height="13"><path d="m0 0 13 13M13 0 0 13" stroke="#888"/></svg></button>
  </div>
</header>

<div class="app-body d-flex flex-column flex-grow-1">
<nav class="tabs d-flex align-items-stretch">
  <a class="file" href="#">文件</a><a class="on" href="#">主屏幕</a><a href="#">定义</a><a href="#">几何</a><a href="#">材料</a><a href="#">物理场</a><a href="#">网格</a><a href="#">研究</a><a href="#">结果</a><a href="#">开发工具</a>
  <button class="help ms-auto align-self-center">?</button>
</nav>
<section class="ribbon d-flex">
  <div class="grp"><div class="grp-items">
    <button class="big plain"><svg class="i40"><use href="#A"/></svg><span>App</span><span>开发器</span></button>
    <button class="big plain"><svg class="i40"><use href="#cab"/></svg><span>模型管理器</span></button></div><div class="grp-name">工作区</div></div>
  <div class="grp wide"><div class="grp-items">
    <button class="big"><svg class="i40"><use href="#cube"/></svg><span>组</span><span class="drop">件 1<i class="tri-s"></i></span></button>
    <button class="big"><svg class="i40"><use href="#poly"/></svg><span>添加组件</span><span class="drop"><i class="tri-s"></i></span></button></div><div class="grp-name">模型</div></div>
  <div class="grp"><div class="grp-items">
    <button class="big"><svg class="i40"><use href="#pi"/></svg><span>参数</span><span class="drop"><i class="tri-s"></i></span></button>
    <div class="smalls w-def"><button><svg class="i20"><use href="#aeq"/></svg>变量<i class="tri-s"></i></button><button><svg class="i20"><use href="#fx"/></svg>函数<i class="tri-s"></i></button><button class="text-black-50 text-nowrap" disabled><svg class="i20"><use href="#pis"/></svg>参数实例</button></div></div><div class="grp-name">定义</div></div>
  <div class="grp"><div class="grp-items">
    <button class="big plain"><svg class="i40" color="#dc6040"><use href="#grid3"/></svg><span>全部构建</span></button>
    <div class="smalls w-geo"><button><svg class="i20"><use href="#imp"/></svg>导入</button><button><svg class="i20"><use href="#llink"/></svg>LiveLink<i class="tri-s"></i></button><button><svg class="i20"><use href="#parts"/></svg>零件库</button></div></div><div class="grp-name">几何</div></div>
  <div class="grp"><div class="grp-items">
    <button class="big"><svg class="i40 overflow-visible" color="#85878a"><use href="#mats"/><use href="#downthin"/></svg><span>添加材料</span></button></div><div class="grp-name">材料</div></div>
  <div class="grp"><div class="grp-items">
    <button class="big"><svg class="i40"><use href="#heat"/></svg><span>固体传热</span><span class="drop"><i class="tri-s"></i></span></button>
    <button class="big"><svg class="i40" color="#378ccc"><use href="#atom"/><use href="#down"/></svg><span>添加物理场</span></button>
    <button class="big plain"><svg class="i40" color="#378ccc"><use href="#du"/><use href="#downthin"/></svg><span>添加数学</span></button></div><div class="grp-name">物理场</div></div>
  <div class="grp"><div class="grp-items">
    <button class="big plain"><svg class="i40" color="#808184"><use href="#grid3"/></svg><span>构建网格</span></button>
    <button class="big"><svg class="i40"><use href="#mesh"/></svg><span>网</span><span class="drop">格 1<i class="tri-s"></i></span></button></div><div class="grp-name">网格</div></div>
  <div class="grp wide"><div class="grp-items">
    <button class="big plain"><svg class="i40"><use href="#eq"/></svg><span>计算</span></button>
    <button class="big"><svg class="i40"><use href="#glasses"/></svg><span>研</span><span class="drop">究 1<i class="tri-s"></i></span></button>
    <button class="big"><svg class="i40" color="#269ab8"><use href="#glasses" y="-4"/><use href="#down"/></svg><span>添加研究</span></button></div><div class="grp-name">研究</div></div>
  <div class="grp"><div class="grp-items">
    <button class="big"><svg class="i40"><use href="#pcube"/></svg><span>温度</span><span class="drop">(ht)<i class="tri-s"></i></span></button>
    <button class="big"><svg class="i40"><use href="#pgroup"/></svg><span>添加绘图组</span><span class="drop"><i class="tri-s"></i></span></button>
    <button class="big"><svg class="i40" color="#378ccc"><use href="#pwin"/><use href="#down" x="3"/></svg><span>添加预定义的绘图</span></button></div><div class="grp-name">结果</div></div>
  <div class="grp wide"><div class="grp-items">
    <button class="big"><svg class="i40"><use href="#wins"/></svg><span>窗口</span><span class="drop"><i class="tri-s"></i></span></button>
    <button class="big"><svg class="i40"><use href="#reset"/></svg><span>重置桌面</span><span class="drop"><i class="tri-s"></i></span></button></div><div class="grp-name">布局</div></div>
</section>

<main class="work d-flex">
<aside class="pane pane-left flex-shrink-0">
  <div class="head-row d-flex"><div class="head">模型开发器</div><button class="ms-auto" aria-label="菜单"><i class="tri tri-gray"></i></button><button class="ms-1 ink-gray" aria-label="固定"><svg class="i20"><use href="#pin"/></svg></button></div>
  <div class="tb tb-left d-flex flex-wrap">
    <button aria-label="后退"><svg class="i20"><use href="#aL"/></svg></button><button aria-label="前进"><svg class="i20"><use href="#aR"/></svg></button><button aria-label="上移"><svg class="i20"><use href="#aU"/></svg></button><button aria-label="下移"><svg class="i20"><use href="#aD"/></svg></button><button aria-label="显示"><svg class="i20"><use href="#eyebar"/></svg></button><button aria-label="折叠"><svg class="i20"><use href="#lup"/></svg></button><button class="arr" aria-label="折叠选项"><i class="tri"></i></button><button aria-label="展开"><svg class="i20"><use href="#ldn"/></svg></button><button class="arr" aria-label="展开选项"><i class="tri"></i></button><button aria-label="模型树节点文本"><svg class="i20"><use href="#lcol"/></svg></button><button class="arr" aria-label="文本选项"><i class="tri"></i></button>
    <button aria-label="过滤"><svg class="i20"><use href="#filt"/></svg></button><button class="arr" aria-label="过滤选项"><i class="tri"></i></button>
  </div>
  <div class="filter-row d-flex align-items-center"><input class="form-control filter-box" placeholder="键入过滤文本" aria-label="键入过滤文本"><button class="px-1" aria-label="刷新"><svg class="i20"><use href="#refresh"/></svg></button></div>
  <div class="tree">
    <ul class="tree-list">
      <li><span class="tw"></span><span class="ic"><svg class="i20"><use href="#tinp"/></svg></span>默认模型输入</li>
      <li><span class="tw"></span><span class="ic"><svg class="i20"><use href="#tmat"/></svg></span>材料</li>
      <li class="l0"><span class="tw"><svg><use href="#dn"/></svg></span><span class="ic"><svg class="i20"><use href="#cube"/></svg></span>组件 1 <em>(comp1)</em></li>
      <li><span class="tw"><svg><use href="#rt"/></svg></span><span class="ic"><svg class="i20"><use href="#tlist"/></svg></span>定义</li>
      <li class="sel"><span class="tw"><svg><use href="#dn"/></svg></span><span class="ic"><svg class="i20"><use href="#tgeo"/></svg></span>几何 1</li>
      <li class="l2"><span class="tw"></span><span class="ic"><svg class="i20"><use href="#tblk"/></svg></span>长方体 1 <em>(blk1)</em></li>
      <li class="l2"><span class="tw"></span><span class="ic"><svg class="i20"><use href="#tblk"/></svg></span>长方体 2 <em>(blk2)</em></li>
      <li class="l2"><span class="tw"></span><span class="ic"><svg class="i20"><use href="#tblk"/></svg></span>长方体 3 <em>(blk3)</em></li>
      <li class="l2"><span class="tw"></span><span class="ic"><svg class="i20"><use href="#tarr"/></svg></span>阵列 1 <em>(arr1)</em></li>
      <li class="l2"><span class="tw"></span><span class="ic"><svg class="i20"><use href="#tuni"/></svg></span>并集 1 <em>(uni1)</em></li>
      <li class="l2"><span class="tw"></span><span class="ic"><svg class="i20"><use href="#tfin"/></svg></span>形成联合体 <em>(fin)</em></li>
      <li><span class="tw"><svg><use href="#dn"/></svg></span><span class="ic"><svg class="i20"><use href="#mats"/></svg></span>材料</li>
      <li class="l2"><span class="tw"><svg><use href="#rt"/></svg></span><span class="ic"><svg class="i20"><use href="#tm"/></svg></span>Alumina <em>(mat1)</em></li>
      <li class="l2"><span class="tw"><svg><use href="#rt"/></svg></span><span class="ic"><svg class="i20"><use href="#tm"/></svg></span>Silica glass <em>(mat2)</em></li>
      <li class="l2"><span class="tw"><svg><use href="#rt"/></svg></span><span class="ic"><svg class="i20"><use href="#tm"/></svg></span>Air <em>(mat3)</em></li>
      <li><span class="tw"><svg><use href="#dn"/></svg></span><span class="ic"><svg class="i20"><use href="#heat"/></svg></span>固体传热 <em>(ht)</em></li>
      <li class="l2"><span class="tw"></span><span class="ic"><svg class="i20"><use href="#cylb"/><use href="#dbadge"/></svg></span>固体 1</li>
      <li class="l2"><span class="tw"></span><span class="ic"><svg class="i20"><use href="#cylb"/><use href="#dbadge"/></svg></span>初始值 1</li>
      <li class="l2"><span class="tw"></span><span class="ic"><svg class="i20"><use href="#cylg"/><use href="#dbadge"/></svg></span>热绝缘 1</li>
      <li class="l2"><span class="tw"></span><span class="ic"><svg class="i20"><use href="#cylb"/></svg></span>热源 1</li>
      <li class="l2"><span class="tw"></span><span class="ic"><svg class="i20"><use href="#cylg"/></svg></span>热通量 1</li>
      <li class="l2"><span class="tw"></span><span class="ic"><svg class="i20"><use href="#cylg"/></svg></span>热接触 1</li>
      <li><span class="tw"></span><span class="ic"><svg class="i20"><use href="#mesh"/></svg></span>网格 1</li>
      <li class="l0"><span class="tw"><svg><use href="#dn"/></svg></span><span class="ic"><svg class="i20"><use href="#glasses"/></svg></span>研究 1</li>
      <li><span class="tw"></span><span class="ic"><svg class="i20"><use href="#tstep"/></svg></span>步骤 1: 稳态</li>
      <li><span class="tw"><svg><use href="#rt"/></svg></span><span class="ic"><svg class="i20"><use href="#tsol"/></svg></span>求解器配置</li>
      <li><span class="tw"></span><span class="ic"><svg class="i20"><use href="#tjob"/></svg></span>作业配置</li>
      <li class="l0"><span class="tw"><svg><use href="#dn"/></svg></span><span class="ic"><svg class="i20"><use href="#pgroup"/></svg></span>结果</li>
      <li><span class="tw"><svg><use href="#rt"/></svg></span><span class="ic"><svg class="i20"><use href="#tdata"/></svg></span>数据集</li>
      <li><span class="tw"></span><span class="ic"><svg class="i20"><text x="3" y="10" font-size="7" fill="#b455a0">8.85</text><text x="3" y="18" font-size="7" fill="#b455a0">e-12</text></svg></span>派生值</li>
    </ul>
    <div class="vbar"><span><svg width="14" height="14"><use href="#cs"/></svg></span><span class="thumb"></span><span class="mt-auto"><svg width="14" height="14"><use href="#cs" transform="rotate(180 7 7)"/></svg></span></div>
    <div class="hbar"><span><svg width="14" height="14"><use href="#cs" transform="rotate(-90 7 7)"/></svg></span><span class="thumb"></span><span><svg width="14" height="14"><use href="#cs" transform="rotate(90 7 7)"/></svg></span></div>
    <div class="corner"></div>
  </div>
</aside>

<section class="pane pane-mid flex-shrink-0">
  <div class="head-row d-flex"><div class="head">设置</div><button class="ms-auto" aria-label="菜单"><i class="tri tri-gray"></i></button><button class="ms-1 ink-gray" aria-label="固定"><svg class="i20"><use href="#pin"/></svg></button></div>
  <div class="sub mt-1">几何</div>
  <button class="build align-self-start"><svg class="i20" color="#dc6040"><use href="#grid3"/></svg>全部构建</button>
  <div class="label-row d-flex align-items-center mt-3 mb-2"><label for="lbl" class="text-nowrap">标签:</label><input id="lbl" class="form-control label-box" value="几何 1"><button class="boxbtn" aria-label="名称"><svg class="i20"><path d="M2.500 2.500h15v13h-15z" fill="#fff" stroke="#999"/><path d="M2.500 4h15" stroke="#999" stroke-width="2"/><path d="M6 8.500h8M6 11h8" stroke="#1fa88f"/><path d="M2 18v-5h5z" fill="#1fa88f"/></svg></button></div>
  <div class="sec d-flex align-items-center mt-1"><i class="tri tri-gray"></i>单位</div>
  <div class="fields">
    <label class="tick"><span class="bx"><input type="checkbox" class="form-check-input d-block"></span>更改单位时缩放值</label>
    <label class="lab" for="s1">长度单位:</label><div class="pick"><select id="s1" class="form-select"><option>cm</option></select></div>
    <label class="lab" for="s2">角单位:</label><div class="pick"><select id="s2" class="form-select"><option>度</option></select></div>
  </div>
  <div class="sec sec-next d-flex align-items-center"><i class="tri tri-gray"></i>高级</div>
  <div class="fields">
    <label class="lab" for="s3">几何表示:</label><div class="pick"><select id="s3" class="form-select"><option>CAD 内核</option></select></div>
    <label class="tick"><span class="bx"><input type="checkbox" class="form-check-input d-block"></span>设计模块布尔操作</label>
    <label class="lab" for="s4">默认修复容差:</label><div class="pick"><select id="s4" class="form-select"><option>自动</option></select></div>
    <label class="tick"><span class="bx"><input type="checkbox" class="form-check-input d-block" checked><svg viewBox="0 0 14 14"><path d="m2 7 4 4 7-9" fill="none" stroke="#222" stroke-width="2.400"/></svg></span>自动构建新操作</label>
    <label class="tick"><span class="bx"><input type="checkbox" class="form-check-input d-block" checked><svg viewBox="0 0 14 14"><path d="m2 7 4 4 7-9" fill="none" stroke="#222" stroke-width="2.400"/></svg></span>离开几何时自动构建</label>
  </div>
</section>

<div class="work d-flex flex-column flex-grow-1">
<section class="pane flex-grow-1">
  <div class="gtabs d-flex"><button class="gt on">图形</button><button class="gt">收敛图 1<svg class="x"><use href="#cross"/></svg></button>
    <div class="ms-auto d-flex align-self-center pt-2"><button aria-label="菜单"><i class="tri tri-blue"></i></button><button aria-label="固定"><svg class="i20" color="#378ccc"><use href="#pin"/></svg></button></div></div>
  <div class="gtb tb d-flex">
    <button aria-label="放大"><svg class="i20"><use href="#mag"/><use href="#plus"/></svg></button><button aria-label="缩小"><svg class="i20"><use href="#mag"/></svg></button><button aria-label="框选缩放"><svg class="i20"><path d="M1.500 8.500h9v9h-9z" fill="none" stroke="#378ccc" stroke-dasharray="2 1"/><use href="#mag" x="2"/><use href="#plus" x="2"/></svg></button><button class="arr" aria-label="缩放选项"><i class="tri"></i></button><button aria-label="缩放到范围"><svg class="i20"><use href="#zext"/></svg></button><button aria-label="缩放到窗口"><svg class="i20"><use href="#zfit"/></svg></button><span class="bar"></span>
    <button aria-label="默认视图"><svg class="i20"><use href="#ax3"/></svg></button><button class="arr" aria-label="视图选项"><i class="tri"></i></button>
    <button aria-label="xy 视图"><svg class="i20"><use href="#axxy" color="#4fa63d"/><path d="M2 17.500h14M15 16l3 1.500-3 1.500z" stroke="#d91f5c" fill="#d91f5c"/><text x="7" y="11" font-size="9" fill="#777">xy</text></svg></button>
    <button aria-label="yz 视图"><svg class="i20"><use href="#axxy" color="#378ccc"/><path d="M2 17.500h14M15 16l3 1.500-3 1.500z" stroke="#4fa63d" fill="#4fa63d"/><text x="7" y="12" font-size="9" fill="#777">yz</text></svg></button>
    <button aria-label="xz 视图"><svg class="i20"><use href="#axxy" color="#378ccc"/><path d="M2 17.500h14M15 16l3 1.500-3 1.500z" stroke="#d91f5c" fill="#d91f5c"/><text x="7" y="12" font-size="9" fill="#777">xz</text></svg></button>
    <button aria-label="正交投影"><svg class="i20"><use href="#lens"/></svg></button><span class="bar"></span>
    <button aria-label="旋转"><svg class="i20"><use href="#rot"/></svg></button><button class="arr" aria-label="旋转选项"><i class="tri"></i></button><span class="bar"></span>
    <button aria-label="选择对象"><svg class="i20"><use href="#cyl2"/></svg></button><button class="arr" aria-label="对象选项"><i class="tri"></i></button><span class="bar"></span>
    <button aria-label="选择边界"><svg class="i20" color="#d9d9d9"><use href="#scyl"/></svg></button><button class="arr" aria-label="边界选项"><i class="tri"></i></button>
    <button aria-label="选择域"><svg class="i20" color="#378ccc"><use href="#scyl"/></svg></button><button class="arr" aria-label="域选项"><i class="tri"></i></button>
    <button aria-label="选择框"><svg class="i20"><use href="#selbox"/></svg></button><button aria-label="取消选择"><svg class="i20"><use href="#clearbox"/></svg></button><span class="bar"></span>
    <button aria-label="隐藏"><svg width="17" height="17"><use href="#eyeoff"/></svg></button><button aria-label="重置隐藏"><svg class="i20"><use href="#eyerot"/></svg></button><button aria-label="查看隐藏"><svg class="i20"><use href="#eyewin"/></svg></button><button class="arr" aria-label="隐藏选项"><i class="tri"></i></button><span class="bar"></span>
    <button aria-label="裁剪"><svg class="i20" color="#999"><use href="#clip"/></svg></button><button class="arr" aria-label="裁剪选项"><i class="tri"></i></button>
    <div class="tgl d-flex"><button aria-label="场景光"><svg class="i20"><use href="#horn"/></svg></button><button class="arr border-start border-primary" aria-label="场景光选项"><i class="tri"></i></button></div>
    <button aria-label="透明"><svg class="i20"><use href="#trbox"/></svg></button><button class="arr" aria-label="透明选项"><i class="tri"></i></button>
    <button aria-label="线框"><svg class="i20" color="#5ba3da"><use href="#box"/></svg></button><button class="tgl" aria-label="坐标轴"><svg class="i20"><use href="#axbox"/></svg></button><button class="tgl" aria-label="栅格"><svg class="i20"><use href="#grbox"/></svg></button><span class="bar"></span>
    <button aria-label="无选择颜色"><svg class="i20"><use href="#nobox"/></svg></button><button aria-label="调色板"><svg class="i20"><use href="#pal"/></svg></button><button class="arr" aria-label="颜色选项"><i class="tri"></i></button><span class="bar"></span>
    <button aria-label="更新"><svg class="i20"><use href="#shut"/></svg></button><button class="arr" aria-label="更新选项"><i class="tri"></i></button><button aria-label="图像快照"><svg class="i20"><use href="#cam"/></svg></button><button aria-label="打印"><svg class="i20"><use href="#prn"/></svg></button>
  </div>
  <div class="canvas-area">
    <div class="corner-logo"><svg class="i20"><use href="#logo"/></svg></div>
    <svg class="scene" viewBox="636 249 1279 666" preserveAspectRatio="xMidYMid meet" role="img" aria-label="几何模型">
      <g fill="none" stroke="#8a8a8a">
        <path d="M1029 361 983 703M1025 390l12 1M1015 463l12 1M1005 536l12 1M996 608l12 1M985 681l14 1"/>
        <path d="M1550 437 1505 769M1539 464h8M1529 534l8 1M1519 605l8 1M1509 676l9 1M1499 747h9"/>
        <path d="M992 720 1289 775 1494 783 1350 758M992 720l134 8M1106 727l291 52M1136 747l148 7"/>
      </g>
      <g stroke="#000" stroke-linejoin="round">
        <g fill="#c1c1c1">
          <path d="M1049 692 1286 734 1284 754 1046 711z"/>
          <path d="M1001 654 1301 704 1297 735 999 683z"/>
          <path d="M1019 656 1091 662V669zM1109 671 1185 678V685zM1203 687 1282 694V701z"/>
          <path d="M1041 362 1058 364 1019 656 1001 654zM1131 371 1149 373 1109 671 1091 669zM1225 380 1244 382 1203 687 1185 685zM1324 390 1343 392 1301 704 1282 701z"/>
        </g>
        <g fill="#7c7c7c">
          <path d="M1058 364 1130 378 1091 662 1019 656zM1149 373 1225 388 1185 678 1109 671zM1244 382 1323 399 1282 694 1203 687z"/>
          <path d="M1343 392 1543 435 1504 719 1301 704z"/>
          <path d="M1286 734 1450 745 1448 763 1284 754z"/>
          <path d="M1301 704 1504 719 1500 747 1297 735z"/>
        </g>
      </g>
      <g font-family="DejaVu Sans,sans-serif" font-size="15" text-anchor="middle" fill="#111">
        <text x="1001" y="393">80</text><text x="991" y="466">60</text><text x="981" y="538">40</text><text x="971" y="611">20</text><text x="967" y="684">0</text>
        <text x="975" y="741">100</text><text x="1122" y="769">50</text><text x="1280" y="798">0</text><text x="1301" y="799">0</text><text x="1411" y="803">50</text><text x="1511" y="807">100</text>
        <g font-size="13"><text x="948" y="528">cm</text><text x="1094" y="801">cm</text><text x="1435" y="838">cm</text></g>
        <text x="696" y="819">z</text><text x="652" y="859">y</text><text x="717" y="869">x</text>
      </g>
      <g stroke-width="2.500"><path d="M690 861 694 834" stroke="#4a82bd"/><path d="m691 835 4-11 3 12z" fill="#4a82bd"/><path d="m690 861-21-3" stroke="#56a948"/><path d="m660 857 11-4-1 9z" fill="#56a948"/><path d="m690 861 14 2" stroke="#dc1c5c"/><path d="m712 863-10 5 1-10z" fill="#dc1c5c"/></g>
    </svg>
  </div>
</section>
<section class="pane pane-msg">
  <div class="gtabs d-flex"><button class="gt on msg">消息<svg class="x"><use href="#cross"/></svg></button><button class="gt short">进度</button><button class="gt short">日志</button><button class="gt">表格<svg class="x"><use href="#cross"/></svg></button>
    <div class="ms-auto d-flex align-self-center pt-3 ink-gray"><button aria-label="菜单"><i class="tri tri-gray"></i></button><button class="ms-1" aria-label="固定"><svg class="i20"><use href="#pin"/></svg></button></div></div>
  <div class="msgbtns d-flex align-items-start">
    <button aria-label="清除"><svg width="16" height="20"><path d="m2 3 5 9" stroke="#999" stroke-width="2"/><path d="m4 12 5-2 4 10H7z" fill="#f7bd6e"/></svg></button>
    <button class="tgl" aria-label="消息"><svg width="24" height="24"><path d="M3.500 5.500h16v14h-16z" fill="#fff" stroke="#5b9bd0"/><path d="M3 6h17" stroke="#5b9bd0" stroke-width="3"/><path d="M9.500 11.500h12v9h-12zl6 5 6-5" fill="#fff" stroke="#378ccc"/></svg></button>
  </div>
</section>
</div>
</main>
</div>
<footer class="status">1.38 GB | 1.93 GB</footer>
</div>

<aside class="monitor d-flex flex-column">
  <div class="d-flex justify-content-center pt-2"><svg width="20" height="24" viewBox="0 0 20 24"><path d="m10 2 8 3v8q-1 5-8 8-7-3-8-8V5z" fill="#ff8b13" stroke="#7b88b8"/><text x="10" y="17" text-anchor="middle" font-size="13" font-weight="700" fill="#fff">2</text></svg></div>
  <hr class="mt-2"><div class="d-flex justify-content-center pt-2"><div class="heat mt-1 mb-2"></div></div><hr>
  <div class="num pt-2">1.9</div><div class="unit"><svg width="8" height="10"><path d="M4 0 8 5H5v5H3V5H0z" fill="#14a4f5"/></svg>K/s</div>
  <div class="num pt-2">4.5</div><div class="unit"><svg width="8" height="10"><path d="M4 10 0 5h3V0h2v5h3z" fill="#10bf63"/></svg>K/s</div>
  <hr class="mt-2"><div class="unit pt-2">CPU</div><div class="num pt-2">61°C</div>
</aside>
<div class="mark-text">CSDN @沉香舅母</div>
</body>
</html>
